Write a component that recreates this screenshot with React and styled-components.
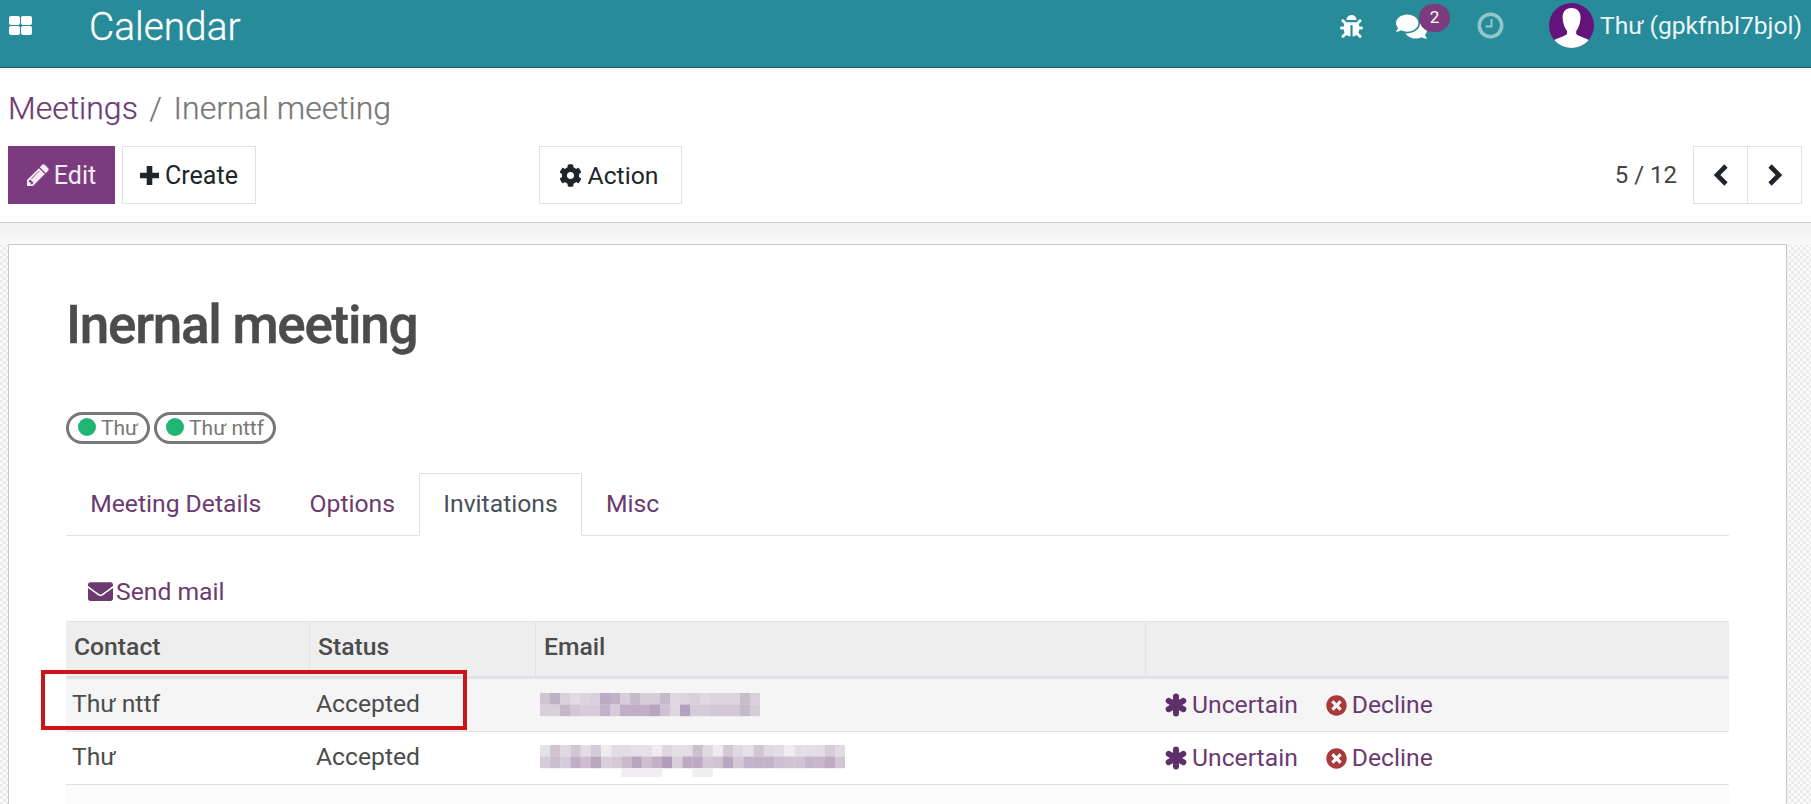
import React from "react";
import styled, { createGlobalStyle } from "styled-components";
import { FaBug, FaCog, FaComments, FaEnvelope, FaTimesCircle } from "react-icons/fa";

const mosaicRowOne = [
  ["#d0c3d2", "#bfb0c6", "#d9d0dc", "#e2dbe4", "#dcd3de", "#d9d0dc", "#bca9c3", "#c2b0c8", "#d9cddc", "#c9b9cd", "#d8ccda", "#d8ccda", "#c7b8cc", "#dfd7e1", "#dcd3de", "#d8cfdb", "#e0d8e2", "#dcd3de", "#dcd3de", "#dcd3de", "#c8bbcc", "#d9d0dc"],
  ["#d9cfdb", "#d9cfdb", "#c5b6ca", "#d2c6d4", "#d8ccda", "#d8ccda", "#c3b1c9", "#d6cbd9", "#bfaec6", "#bfaec6", "#bfaec6", "#b9a5c1", "#cfc1d2", "#dfd6e1", "#b6a1bf", "#d6cbd8", "#d6cbd8", "#d3c7d6", "#d3c7d6", "#d3c7d6", "#c5b8ca", "#d6cbd8"],
];

const mosaicRowTwo = [
  ["#e6e0e8", "#cfc3d2", "#dfd7e1", "#d1c6d4", "#e4dde6", "#d6ccd9", "#efebf0", "#e2dce4", "#e2dce4", "#e5dfe7", "#e5dfe7", "#efebf0", "#ded6e0", "#e3dde5", "#e3dde5", "#cdbfd0", "#dfd9e2", "#eeeaef", "#d3c8d6", "#dfd7e1", "#e6e0e8", "#d2c6d5", "#e0d9e3", "#e4dde6", "#f0ecf1", "#e3dde5", "#e3dde5", "#e3dde5", "#d6ccd9", "#e1dae3"],
  ["#d6ccd9", "#cbbdcf", "#d6ccd9", "#c0aec7", "#cdbfd1", "#b9a6c1", "#d9cfdb", "#d5c9d7", "#c9bace", "#b7a4bf", "#cdbfd1", "#c1b0c8", "#b29cbb", "#d9cfdb", "#bda9c3", "#bda9c3", "#d4c8d7", "#cfc2d3", "#b9a6c1", "#d3c8d6", "#c3b3c9", "#c3b3c9", "#c3b3c9", "#cdc0d1", "#d0c3d3", "#d0c3d3", "#c5b6cb", "#c5b6cb", "#bdabc4", "#d2c6d5"],
];

const GlobalStyle = createGlobalStyle`
  html, body {
    margin: 0;
    height: 100%;
    overflow: hidden;
    background: #fff;
    font-family: Roboto, "Noto Sans", sans-serif;
  }
  * { box-sizing: border-box; }
`;

const Page = styled.div`
  width: 1811px;
  height: 804px;
  display: flex;
  flex-direction: column;
  overflow: hidden;
  position: relative;
`;

const Navbar = styled.header`
  height: 68px;
  flex: none;
  background: #288b9a;
  border-bottom: 1px solid #1c5c66;
  display: flex;
  align-items: flex-start;
  color: #fff;
`;

const AppGrid = styled.div`
  width: 23px;
  height: 19px;
  margin: 16px 0 0 9px;
  display: grid;
  grid-template-columns: 11px 11px;
  grid-template-rows: 9px 9px;
  gap: 1px;

  span {
    background: #fff;
    border-radius: 2px;
  }
`;

const AppName = styled.div`
  margin: 3px 0 0 57px;
  font-size: 38.8px;
  line-height: 48px;
  font-weight: 300;
  -webkit-text-stroke: 0.3px currentColor;
`;

const NavRight = styled.div`
  margin-left: auto;
  display: flex;
  align-items: flex-start;
  height: 100%;
`;

const NavIcon = styled.div`
  margin-top: ${(p) => p.$top}px;
  margin-right: ${(p) => p.$gap}px;
  font-size: ${(p) => p.$size}px;
  line-height: 0;
  position: relative;
  opacity: ${(p) => p.$fade || 1};
`;

const Badge = styled.span`
  position: absolute;
  left: 23px;
  top: -7px;
  width: 31px;
  height: 28px;
  border-radius: 14px;
  background: #7c3b7f;
  font-size: 17px;
  line-height: 26px;
  text-align: center;
  color: #fff;
`;

const Avatar = styled.svg`
  width: 45px;
  height: 45px;
  margin-top: 3px;
  display: block;
`;

const UserName = styled.div`
  margin: 7px 9px 0 6px;
  font-size: 24.6px;
  line-height: 38px;
  color: #eaf5f6;
  white-space: nowrap;
`;

const ControlPanel = styled.div`
  height: 155px;
  flex: none;
  background: #fff;
  border-bottom: 1px solid #cfcfcf;
  padding: 0 9px 0 8px;
`;

const Breadcrumb = styled.div`
  height: 78px;
  padding-top: 18px;
  font-size: 32px;
  line-height: 44px;
  font-weight: 300;
  color: #777;
  -webkit-text-stroke: 0.25px currentColor;

  a {
    color: #6b3a70;
  }

  i {
    font-style: normal;
    margin: 0 11.5px;
  }
`;

const Toolbar = styled.div`
  display: flex;
  align-items: stretch;
  height: 58px;
`;

const Button = styled.button`
  height: 58px;
  width: ${(p) => p.$width}px;
  margin-left: ${(p) => p.$left || 0}px;
  border: ${(p) => (p.$primary ? "none" : "1px solid #dee2e6")};
  background: ${(p) => (p.$primary ? "#7c3b7f" : "#fff")};
  color: ${(p) => (p.$primary ? "#f5ecf5" : "#212529")};
  font-family: inherit;
  font-size: ${(p) => p.$font || 25}px;
  padding: 0 ${(p) => p.$shift || 0}px 0 0;
  display: flex;
  align-items: center;
  justify-content: center;
  gap: ${(p) => p.$gap || 5}px;
`;

const Pager = styled.div`
  margin-left: auto;
  display: flex;
  align-items: center;
`;

const PagerText = styled.span`
  font-size: 24px;
  color: #444;
  margin-right: 16px;
`;

const PagerButton = styled.button`
  width: ${(p) => p.$width}px;
  height: 58px;
  border: 1px solid #dee2e6;
  border-left: ${(p) => (p.$joined ? "none" : "1px solid #dee2e6")};
  background: #fff;
  color: #212529;
  padding: 0;
  display: flex;
  align-items: center;
  justify-content: center;
`;

const Content = styled.main`
  flex: 1;
  padding: 21px 24px 0 8px;
  background-color: #f3f3f4;
  background-image:
    linear-gradient(#f2f2f3, #f8f8f8 22px, transparent 22px),
    repeating-conic-gradient(#ebebeb 0 25%, #fbfbfb 0 50%);
  background-size: 100% 100%, 6px 6px;
  min-height: 0;
`;

const Sheet = styled.article`
  height: 100%;
  background: #fff;
  border: 1px solid #c9c9c9;
  border-bottom: none;
  padding: 0 57px 0 57px;
`;

const Title = styled.h1`
  margin: 0;
  padding-top: 47px;
  height: 167px;
  font-size: 53px;
  line-height: 66px;
  font-weight: 500;
  color: #4c4c4c;
  letter-spacing: -1.25px;
  -webkit-text-stroke: 0.5px currentColor;
`;

const Tags = styled.div`
  display: flex;
  gap: 4px;
  height: 61px;
`;

const Tag = styled.div`
  height: 32px;
  padding: 0 9px 0 9px;
  display: flex;
  align-items: center;
  gap: 5px;
  border: 3.5px solid #777;
  border-radius: 16px;
  font-size: 21px;
  color: #777;

  i {
    width: 18px;
    height: 18px;
    border-radius: 50%;
    background: #21b573;
    margin-top: -3px;
  }
`;

const Tabs = styled.nav`
  display: flex;
  height: 63px;
  border-bottom: 1px solid #dee2e6;
`;

const Tab = styled.div`
  height: 63px;
  padding: 12px 23.2px 0;
  font-size: 24.7px;
  line-height: 36px;
  color: ${(p) => (p.$active ? "#495057" : "#6b3a70")};
  background: ${(p) => (p.$active ? "#fff" : "transparent")};
  border: 1px solid ${(p) => (p.$active ? "#dee2e6" : "transparent")};
  border-bottom-color: ${(p) => (p.$active ? "#fff" : "transparent")};
`;

const SendMail = styled.div`
  height: 85px;
  padding: 38px 0 0 22px;
  display: flex;
  align-items: flex-start;
  gap: 3px;
  font-size: 24.7px;
  line-height: 36px;
  color: #6b3a70;

  svg {
    margin-top: 5px;
  }
`;

const Table = styled.div`
  display: flex;
  flex-direction: column;
`;

const HeadRow = styled.div`
  display: grid;
  grid-template-columns: 243px 226px 610px 1fr;
  height: 58px;
  background: #eee;
  border-top: 1px solid #e2e2e2;
  border-bottom: 3px solid #dee2e6;
`;

const HeadCell = styled.div`
  padding: 7px 8px 0;
  font-size: 24.7px;
  line-height: 36px;
  font-weight: 500;
  color: #4c4c4c;
  border-left: ${(p) => (p.$first ? "none" : "1px solid #e2e2e2")};
`;

const Row = styled.div`
  display: grid;
  grid-template-columns: 243px 226px 610px 1fr;
  height: 53px;
  background: ${(p) => (p.$shade ? "#f5f5f5" : "#fff")};
  border-bottom: 1px solid #dee2e6;
`;

const Cell = styled.div`
  padding: 7px ${(p) => p.$side || 7}px 0;
  font-size: 24.7px;
  line-height: 36px;
  color: #4c4c4c;
  display: flex;
  align-items: flex-start;
`;

const MailCell = styled.div`
  padding: ${(p) => p.$top}px 0 0 5px;
`;

const Mosaic = styled.svg`
  display: block;
`;

const ActionCell = styled.div`
  padding: 8px 0 0 20px;
  font-size: 24.7px;
  line-height: 36px;
  color: #6b3a70;
  display: flex;
  align-items: flex-start;
`;

const RowAction = styled.span`
  display: flex;
  align-items: center;
  gap: 5px;
  margin-right: ${(p) => p.$gap || 0}px;
  height: 36px;
  color: #6b3a70;

  svg {
    color: ${(p) => p.$tint || "#5f2f69"};
    flex: none;
  }
`;

const Tail = styled.div`
  height: 30px;
  background: #fbfbfb;
`;

const Highlight = styled.div`
  position: absolute;
  left: 41px;
  top: 670px;
  width: 426px;
  height: 60px;
  border: 4px solid #c8141b;
  pointer-events: none;
`;

function Pixels({ rows, tail, pitch }) {
  const width = Math.max(...rows.map((r) => r.length)) * pitch;
  return (
    <Mosaic width={width} height={34} viewBox={`0 0 ${width} 34`}>
      {rows.map((row, y) =>
        row.map((fill, x) => (
          <rect key={`${y}-${x}`} x={x * pitch} y={y * 11.5} width={pitch + 0.2} height={11.7} fill={fill} />
        ))
      )}
      {tail && tail.map((x) => <rect key={x} x={x * pitch} y={23} width={pitch + 0.2} height={9} fill="#f0eef1" />)}
    </Mosaic>
  );
}

function AsteriskIcon() {
  return (
    <svg width="22" height="24" viewBox="0 0 22 24" fill="none" stroke="currentColor" strokeWidth="6" strokeLinecap="round">
      <path d="M11 3.500v17M3.700 7.800l14.600 8.400M18.300 7.800 3.700 16.200" />
    </svg>
  );
}

function Chevron({ d }) {
  return (
    <svg width="18" height="24" viewBox="0 0 18 24" fill="none" stroke="currentColor" strokeWidth="4.6">
      <path d={d} />
    </svg>
  );
}

function Attendee({ name, shade, rows, tail, top, pitch }) {
  return (
    <Row $shade={shade}>
      <Cell $side={6}>{name}</Cell>
      <Cell>Accepted</Cell>
      <MailCell $top={top}>
        <Pixels rows={rows} tail={tail} pitch={pitch} />
      </MailCell>
      <ActionCell>
        <RowAction $gap={28}>
          <AsteriskIcon />
          Uncertain
        </RowAction>
        <RowAction $tint="#a83a3c">
          <FaTimesCircle size={21} />
          Decline
        </RowAction>
      </ActionCell>
    </Row>
  );
}

export default function App() {
  return (
    <Page>
      <GlobalStyle />
      <Navbar>
        <AppGrid>
          <span />
          <span />
          <span />
          <span />
        </AppGrid>
        <AppName>Calendar</AppName>
        <NavRight>
          <NavIcon $top={15} $gap={33} $size={23}>
            <FaBug />
          </NavIcon>
          <NavIcon $top={11} $gap={50} $size={31}>
            <FaComments />
            <Badge>2</Badge>
          </NavIcon>
          <NavIcon $top={12} $gap={45} $size={26} $fade={0.5}>
            <svg width="27" height="27" viewBox="0 0 27 27" fill="none" stroke="#fff" strokeWidth="3.6">
              <circle cx="13.5" cy="13.5" r="11.2" />
              <path d="M14.5 7v7.5H8.5" strokeWidth="2" />
            </svg>
          </NavIcon>
          <Avatar viewBox="0 0 45 45">
            <defs>
              <clipPath id="avatar-clip">
                <circle cx="22.5" cy="22.5" r="22.5" />
              </clipPath>
            </defs>
            <g clipPath="url(#avatar-clip)">
              <rect width="45" height="45" fill="#64137c" />
              <path
                d="M22.5 5c6.500 0 9.500 4.500 9 11-.4 5-2 9-4.300 12v3c3 2.500 9 3.500 14 7v8H4v-8c5-3.500 11-4.500 14-7v-3c-2.300-3-3.900-7-4.300-12-.5-6.500 2.300-11 8.800-11z"
                fill="#fff"
              />
            </g>
          </Avatar>
          <UserName>Thư (gpkfnbl7bjol)</UserName>
        </NavRight>
      </Navbar>
      <ControlPanel>
        <Breadcrumb>
          <a>Meetings</a>
          <i>/</i>
          Inernal meeting
        </Breadcrumb>
        <Toolbar>
          <Button $primary $width={107}>
            <svg width="22" height="22" viewBox="0 0 1536 1536" fill="currentColor">
              <path d="M363 1408l91-91-235-235-91 91v107h128v128h107zm523-928q0-22-22-22-10 0-17 7L305 1007q-7 7-7 17 0 22 22 22 10 0 17-7l542-542q7-7 7-17zm-54-192l416 416-832 832H0v-416zm683 96q0 53-37 90l-166 166-416-416 166-165q36-38 90-38 53 0 91 38l235 234q37 39 37 91z" />
            </svg>
            Edit
          </Button>
          <Button $width={134} $left={7} $gap={6}>
            <svg width="19" height="19" viewBox="0 0 19 19" fill="none" stroke="currentColor" strokeWidth="5.6">
              <path d="M9.5 0v19M0 9.500h19" />
            </svg>
            Create
          </Button>
          <Button $width={143} $left={283} $gap={6} $font={24.7} $shift={4}>
            <FaCog size={23} />
            Action
          </Button>
          <Pager>
            <PagerText>5 / 12</PagerText>
            <PagerButton $width={55}>
              <Chevron d="M14 3 5 12l9 9" />
            </PagerButton>
            <PagerButton $width={54} $joined>
              <Chevron d="M4 3l9 9-9 9" />
            </PagerButton>
          </Pager>
        </Toolbar>
      </ControlPanel>
      <Content>
        <Sheet>
          <Title>Inernal meeting</Title>
          <Tags>
            <Tag>
              <i />
              Thư
            </Tag>
            <Tag>
              <i />
              Thư nttf
            </Tag>
          </Tags>
          <Tabs>
            <Tab>Meeting Details</Tab>
            <Tab>Options</Tab>
            <Tab $active>Invitations</Tab>
            <Tab>Misc</Tab>
          </Tabs>
          <SendMail>
            <FaEnvelope size={25} />
            Send mail
          </SendMail>
          <Table>
            <HeadRow>
              <HeadCell $first>Contact</HeadCell>
              <HeadCell>Status</HeadCell>
              <HeadCell>Email</HeadCell>
              <HeadCell />
            </HeadRow>
            <Attendee name="Thư nttf" shade rows={mosaicRowOne} top={14} pitch={10} />
            <Attendee name="Thư" rows={mosaicRowTwo} tail={[8, 9, 10, 11, 15, 16]} top={13} pitch={10.17} />
            <Tail />
          </Table>
        </Sheet>
      </Content>
      <Highlight />
    </Page>
  );
}
